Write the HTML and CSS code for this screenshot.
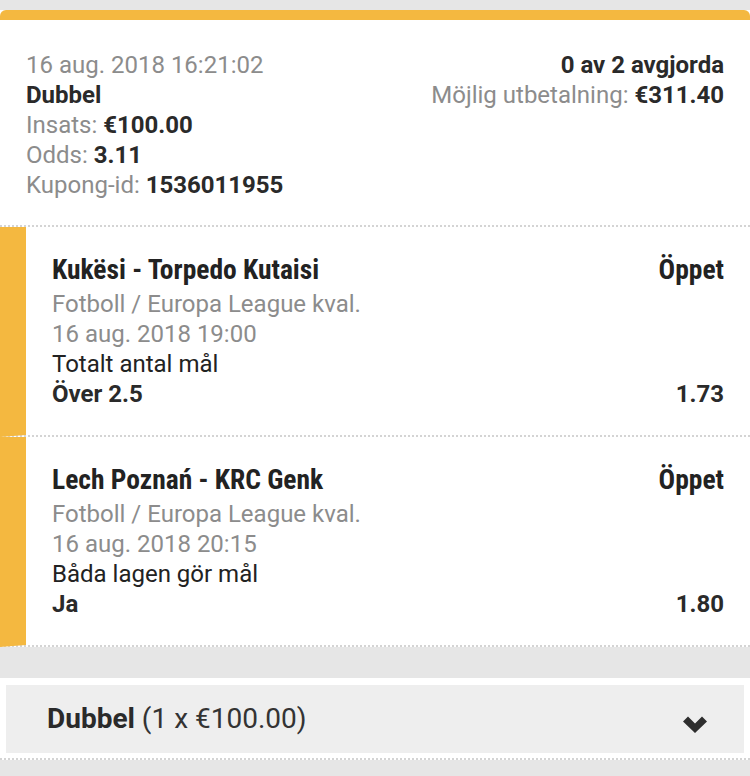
FILE: index.html
```html
<!DOCTYPE html>
<html lang="sv">
<head>
    <meta charset="UTF-8">
    <meta name="viewport" content="width=device-width, initial-scale=1.0">
    <title>Kupong</title>
    <link rel="stylesheet" href="styles.css">
</head>
<body>
    <div class="coupon">
        <div class="coupon-top"></div>
        <div class="coupon-head">
            <div class="head-left">
                <div class="muted">16 aug. 2018 16:21:02</div>
                <div class="strong">Dubbel</div>
                <div class="muted">Insats: <b>€100.00</b></div>
                <div class="muted">Odds: <b>3.11</b></div>
                <div class="muted">Kupong-id: <b>1536011955</b></div>
            </div>
            <div class="head-right">
                <div class="strong">0 av 2 avgjorda</div>
                <div class="muted">Möjlig utbetalning: <b>€311.40</b></div>
            </div>
        </div>

        <div class="selection">
            <div class="sel-row">
                <span class="sel-title">Kukësi - Torpedo Kutaisi</span>
                <span class="sel-status">Öppet</span>
            </div>
            <div class="muted">Fotboll / Europa League kval.</div>
            <div class="muted">16 aug. 2018 19:00</div>
            <div>Totalt antal mål</div>
            <div class="sel-row">
                <b>Över 2.5</b>
                <b>1.73</b>
            </div>
        </div>

        <div class="selection">
            <div class="sel-row">
                <span class="sel-title">Lech Poznań - KRC Genk</span>
                <span class="sel-status">Öppet</span>
            </div>
            <div class="muted">Fotboll / Europa League kval.</div>
            <div class="muted">16 aug. 2018 20:15</div>
            <div>Båda lagen gör mål</div>
            <div class="sel-row">
                <b>Ja</b>
                <b>1.80</b>
            </div>
        </div>
    </div>

    <div class="spacer"></div>

    <div class="bet-types">
        <div class="bet-type">
            <span><b>Dubbel</b> (1 x €100.00)</span>
            <svg class="chevron" width="24" height="17" viewBox="0 0 24 17">
                <path d="M0 5.5 L5 0.5 L12 7.5 L19 0.5 L24 5.5 L12 17 Z" fill="#2e2e2e"/>
            </svg>
        </div>
    </div>
</body>
</html>
```

FILE: styles.css
```css
body {
    margin: 0;
    padding: 10px 0 0;
    background: #e6e6e6;
    font-family: Roboto, "Liberation Sans", sans-serif;
    font-size: 24px;
    line-height: 30px;
    color: #222;
}
b,
.strong {
    font-weight: 700;
    color: #2a2a2a;
}
.muted {
    color: #8c8c8c;
}
.coupon {
    background: #fff;
}
.coupon-top {
    height: 10px;
    background: #f4b840;
    border-radius: 6px 6px 0 0;
}
.coupon-head {
    display: flex;
    justify-content: space-between;
    padding: 30px 26px 25px;
    border-bottom: 2px dotted #d4d4d4;
}
.head-right {
    text-align: right;
}
.selection {
    padding: 24px 26px 26px;
    border-left: 26px solid #f4b840;
    border-bottom: 2px dotted #d4d4d4;
}
.sel-row {
    display: flex;
    justify-content: space-between;
}
.sel-title,
.sel-status {
    font-family: "Roboto Condensed", "Liberation Sans Narrow", "DejaVu Sans Condensed", sans-serif;
    font-stretch: condensed;
    font-weight: 700;
    font-size: 27.5px;
    line-height: 38px;
    color: #222;
}
.spacer {
    height: 31px;
}
.bet-types {
    background: #fff;
    padding: 7px 6px 5px;
    border-bottom: 2px dotted #d4d4d4;
}
.bet-type {
    display: flex;
    justify-content: space-between;
    align-items: center;
    background: #eeeeee;
    height: 68px;
    padding: 0 37px 0 41px;
    font-size: 28px;
    line-height: 30px;
    color: #333;
}
.bet-type b {
    color: #2a2a2a;
}
.chevron {
    margin-top: 10px;
}
```
